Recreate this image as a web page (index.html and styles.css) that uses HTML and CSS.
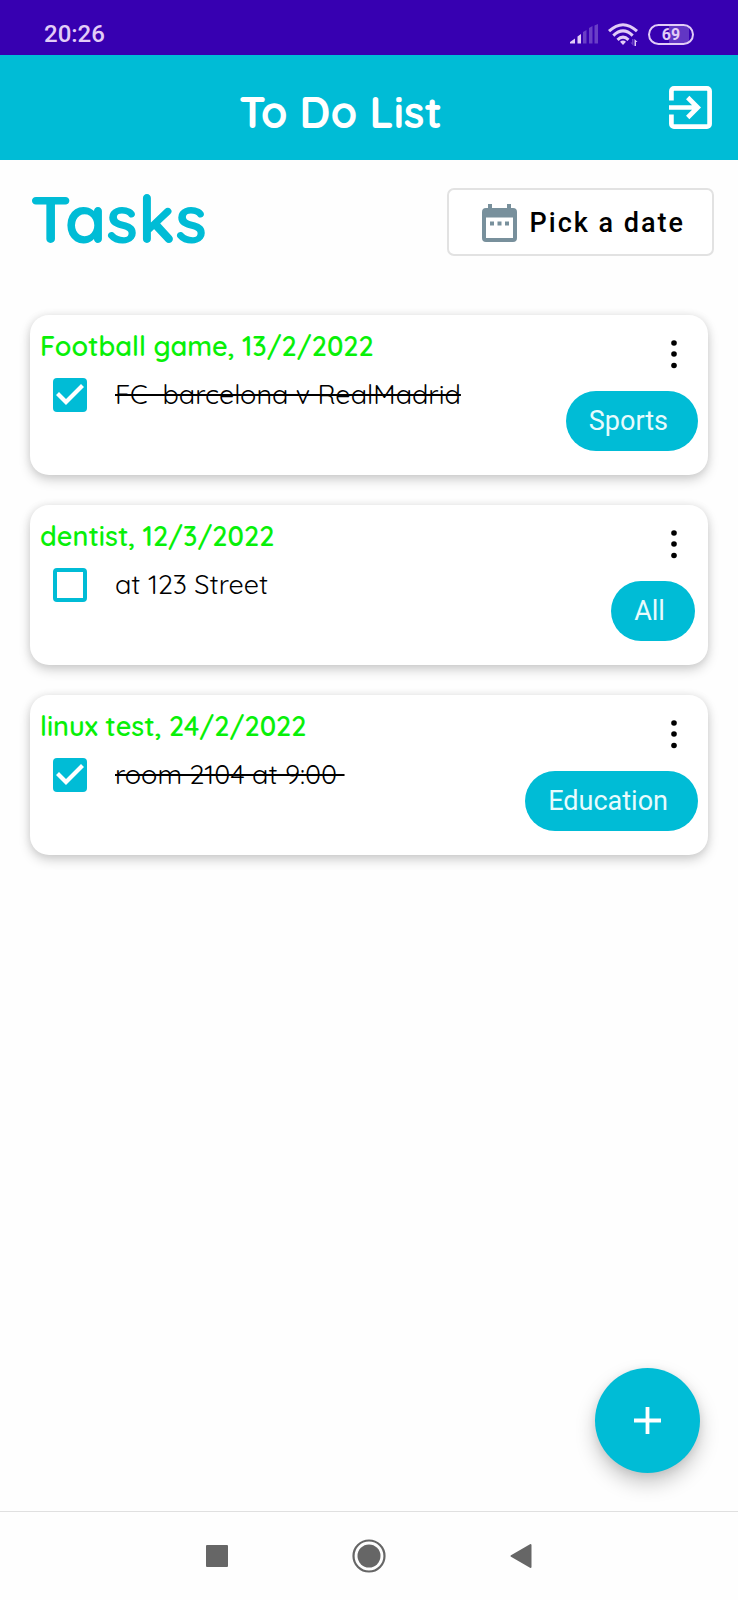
FILE: index.html
```html
<!DOCTYPE html>
<html lang="en">
<head>
<meta charset="utf-8">
<meta name="viewport" content="width=device-width, initial-scale=1">
<title>To Do List</title>
<link rel="stylesheet" href="styles.css">
</head>
<body>
<div class="screen">
  <div class="status-bar">
    <time class="clock">20:26</time>
    <div class="status-icons">
      <svg class="signal" width="28" height="20" viewBox="0 0 28 20" aria-hidden="true">
        <path fill="#e2ccf7" d="M0 19.500v-1.500l5-3.500v5zM7.500 12.500l3.500-2.500v9.500H7.500z"/>
        <path fill="#6a3fc6" d="M13 8l3.500-2v13.500H13zM19 4l3.500-2v17.500H19zM24.500 1.500L28 0v19.500h-3.500z"/>
      </svg>
      <svg class="wifi" width="30" height="23" viewBox="0 0 30 23" aria-hidden="true">
        <g fill="none" stroke="#e2ccf7" stroke-width="3">
          <path d="M1 8.200Q15-4.800 29 8.200"/>
          <path d="M5.300 12.600Q15 3.300 24.700 12.600"/>
          <path d="M9.500 16.800Q15 11.500 20.500 16.800"/>
        </g>
        <path fill="#e2ccf7" d="M12 18.800q3-2.500 6 0l-3 3.200zM26.500 16l3 3h-1.500v4h-1.500z"/>
        <path fill="#6a3fc6" d="M22.500 19.500h1.500V16h1.500v7z"/>
      </svg>
      <span class="battery">69</span>
    </div>
  </div>

  <header class="app-bar">
    <h1 class="app-title">To Do List</h1>
    <button class="icon-button exit" type="button" aria-label="Log out">
      <svg width="43" height="43" viewBox="0 0 43 43" aria-hidden="true">
        <path fill="none" stroke="#fff" stroke-width="4.700" d="M2.400 14.500V5a2.600 2.600 0 0 1 2.600-2.600h33a2.600 2.600 0 0 1 2.600 2.600v33a2.600 2.600 0 0 1-2.600 2.600H5A2.600 2.600 0 0 1 2.400 38v-9.500"/>
        <path fill="none" stroke="#fff" stroke-width="4.700" d="M0 21.500h28M18.700 11.500l10 10-10 10"/>
      </svg>
    </button>
  </header>

  <main class="content">
    <div class="toolbar">
      <h2 class="heading">Tasks</h2>
      <button class="date-button" type="button">
        <svg width="35" height="38" viewBox="0 0 35 38" aria-hidden="true">
          <path fill="#78909c" fill-rule="evenodd" d="M6 0h4v4h15V0h4v4h2a4 4 0 0 1 4 4v26a4 4 0 0 1-4 4H4a4 4 0 0 1-4-4V8a4 4 0 0 1 4-4h2zM4 13.500V34h27V13.500zM8 17.500h4v4H8zM15.500 17.500h4v4h-4zM23 17.500h4v4h-4z"/>
        </svg>
        <span>Pick a date</span>
      </button>
    </div>

    <ul class="task-list">
      <li class="card">
        <div class="card-main">
          <h3 class="card-title">Football game, 13/2/2022</h3>
          <div class="card-row">
            <input class="check" type="checkbox" id="task-1" checked>
            <label class="task-text" for="task-1">FC  barcelona v RealMadrid</label>
          </div>
        </div>
        <div class="card-side">
          <button class="icon-button more" type="button" aria-label="More options">
            <svg width="8" height="30" viewBox="0 0 8 30" aria-hidden="true"><circle cx="4" cy="4" r="2.800"/><circle cx="4" cy="15" r="2.800"/><circle cx="4" cy="26.500" r="2.800"/></svg>
          </button>
          <div class="chip-slot"><button class="chip" type="button">Sports</button></div>
        </div>
      </li>
      <li class="card">
        <div class="card-main">
          <h3 class="card-title">dentist, 12/3/2022</h3>
          <div class="card-row">
            <input class="check" type="checkbox" id="task-2">
            <label class="task-text" for="task-2">at 123 Street</label>
          </div>
        </div>
        <div class="card-side">
          <button class="icon-button more" type="button" aria-label="More options">
            <svg width="8" height="30" viewBox="0 0 8 30" aria-hidden="true"><circle cx="4" cy="4" r="2.800"/><circle cx="4" cy="15" r="2.800"/><circle cx="4" cy="26.500" r="2.800"/></svg>
          </button>
          <div class="chip-slot"><button class="chip" type="button">All</button></div>
        </div>
      </li>
      <li class="card">
        <div class="card-main">
          <h3 class="card-title">linux test, 24/2/2022</h3>
          <div class="card-row">
            <input class="check" type="checkbox" id="task-3" checked>
            <label class="task-text" for="task-3">room 2104 at 9:00 </label>
          </div>
        </div>
        <div class="card-side">
          <button class="icon-button more" type="button" aria-label="More options">
            <svg width="8" height="30" viewBox="0 0 8 30" aria-hidden="true"><circle cx="4" cy="4" r="2.800"/><circle cx="4" cy="15" r="2.800"/><circle cx="4" cy="26.500" r="2.800"/></svg>
          </button>
          <div class="chip-slot"><button class="chip" type="button">Education</button></div>
        </div>
      </li>
    </ul>

    <button class="fab" type="button" aria-label="Add task">
      <svg width="27" height="27" viewBox="0 0 27 27" aria-hidden="true"><path fill="none" stroke="#fff" stroke-width="3.800" d="M0 13.500h27M13.500 0v27"/></svg>
    </button>
  </main>

  <nav class="nav-bar" aria-label="System">
    <button class="icon-button nav-button" type="button" aria-label="Recent apps">
      <svg width="22" height="22" viewBox="0 0 22 22" aria-hidden="true"><rect width="22" height="22" rx="1" fill="#666"/></svg>
    </button>
    <button class="icon-button nav-button" type="button" aria-label="Home">
      <svg width="34" height="34" viewBox="0 0 34 34" aria-hidden="true"><circle cx="17" cy="17" r="15.500" fill="none" stroke="#666" stroke-width="2.200"/><circle cx="17" cy="17" r="11.500" fill="#666"/></svg>
    </button>
    <button class="icon-button nav-button" type="button" aria-label="Back">
      <svg width="22" height="26" viewBox="0 0 22 26" aria-hidden="true"><path fill="#666" stroke="#666" stroke-width="2" stroke-linejoin="round" d="M1.500 13L20.500 2v22z"/></svg>
    </button>
  </nav>
</div>
</body>
</html>
```
FILE: styles.css
```css
* {
  box-sizing: border-box;
}

:root {
  --accent: #00bcd6;
  --rounded: Quicksand, Lato, sans-serif;
}

body {
  margin: 0;
  background: #fefefe;
  color: #000;
  font-family: Roboto, sans-serif;
}

h1, h2, h3, ul {
  margin: 0;
  padding: 0;
}

button {
  border: 0;
  font-family: inherit;
  cursor: pointer;
}

svg {
  display: block;
  flex: none;
}

.screen {
  display: flex;
  flex-direction: column;
  min-height: 100vh;
}

.icon-button {
  display: flex;
  align-items: center;
  justify-content: center;
  padding: 0;
  background: none;
}

/* Status bar */
.status-bar {
  display: flex;
  align-items: center;
  justify-content: space-between;
  height: 55px;
  padding: 13px 44px 0;
  background: #3700b1;
  color: #e2ccf7;
}

.clock {
  font-size: 24px;
  font-weight: 500;
}

.status-icons {
  display: flex;
  align-items: center;
  gap: 10px;
}

.battery {
  width: 46px;
  height: 21px;
  border: 2px solid #e2ccf7;
  border-radius: 11px;
  background: linear-gradient(to right, #3700b1 45%, #6236c4 45% 92%, #3700b1 92%);
  font-size: 16px;
  font-weight: 700;
  line-height: 18px;
  text-align: center;
}

/* App bar */
.app-bar {
  display: flex;
  align-items: center;
  gap: 14px;
  height: 105px;
  padding: 0 26px;
  background: var(--accent);
  color: #fff;
}

.app-title {
  flex: 1;
  padding-top: 8px;
  font: 700 43px/52px var(--rounded);
  text-align: center;
}

/* Content */
.content {
  display: flex;
  flex: 1;
  flex-direction: column;
}

.toolbar {
  display: flex;
  align-items: flex-start;
  justify-content: space-between;
  padding: 28px 24px 0 30px;
}

.heading {
  color: var(--accent);
  font: 700 66px/62px var(--rounded);
}

.date-button {
  display: flex;
  align-items: center;
  gap: 13px;
  height: 68px;
  padding: 2px 27px 0 33px;
  border: 2px solid #e2e2e2;
  border-radius: 7px;
  background: #fff;
  color: #000;
  font-size: 27px;
  font-weight: 500;
  letter-spacing: 2px;
}

.task-list {
  display: flex;
  flex-direction: column;
  gap: 30px;
  margin-top: 44px;
  padding: 15px 30px;
  overflow: hidden;
  list-style: none;
}

.card {
  display: flex;
  justify-content: space-between;
  min-height: 160px;
  padding: 14px 10px 20px;
  border-radius: 19px;
  background: #fff;
  box-shadow: 0 5px 12px rgba(0, 0, 0, 0.18), 0 0 8px rgba(0, 0, 0, 0.08);
}

.card-title {
  color: #08f008;
  font: 600 27px/34px var(--rounded);
}

.card-row {
  display: flex;
  align-items: flex-start;
  gap: 28px;
  margin-top: 15px;
  padding-left: 13px;
}

.check {
  flex: none;
  width: 34px;
  height: 34px;
  margin: 0;
  border: 4px solid var(--accent);
  border-radius: 4px;
  appearance: none;
}

.check:checked {
  border: 0;
  background: var(--accent);
}

.check:checked::before {
  content: "";
  display: block;
  width: 34px;
  height: 34px;
  background: #fff;
  clip-path: polygon(3px 17px, 6px 14px, 13px 21px, 28px 6px, 31px 9px, 13px 27px);
}

.task-text {
  font: 400 27px/32px var(--rounded);
  white-space: pre-wrap;
}

.check:checked + .task-text {
  text-decoration: line-through 2px;
}

.card-side {
  display: flex;
  flex-direction: column;
  align-items: flex-end;
  gap: 17px;
}

.more {
  width: 48px;
  height: 45px;
  padding-top: 5px;
}

.chip-slot {
  display: flex;
  justify-content: center;
  min-width: 90px;
}

.chip {
  height: 60px;
  padding: 0 30px 0 23px;
  border-radius: 30px;
  background: var(--accent);
  color: #e8fbfd;
  font-size: 27px;
}

.fab {
  display: flex;
  align-items: center;
  justify-content: center;
  width: 105px;
  height: 105px;
  margin: auto 38px 38px auto;
  padding: 0;
  border-radius: 50%;
  background: var(--accent);
  box-shadow: 0 10px 20px rgba(0, 0, 0, 0.22), 0 2px 8px rgba(0, 0, 0, 0.08);
}

/* System navigation */
.nav-bar {
  display: flex;
  justify-content: center;
  height: 89px;
  border-top: 1px solid #e0e0e0;
}

.nav-button {
  width: 152px;
}
```
